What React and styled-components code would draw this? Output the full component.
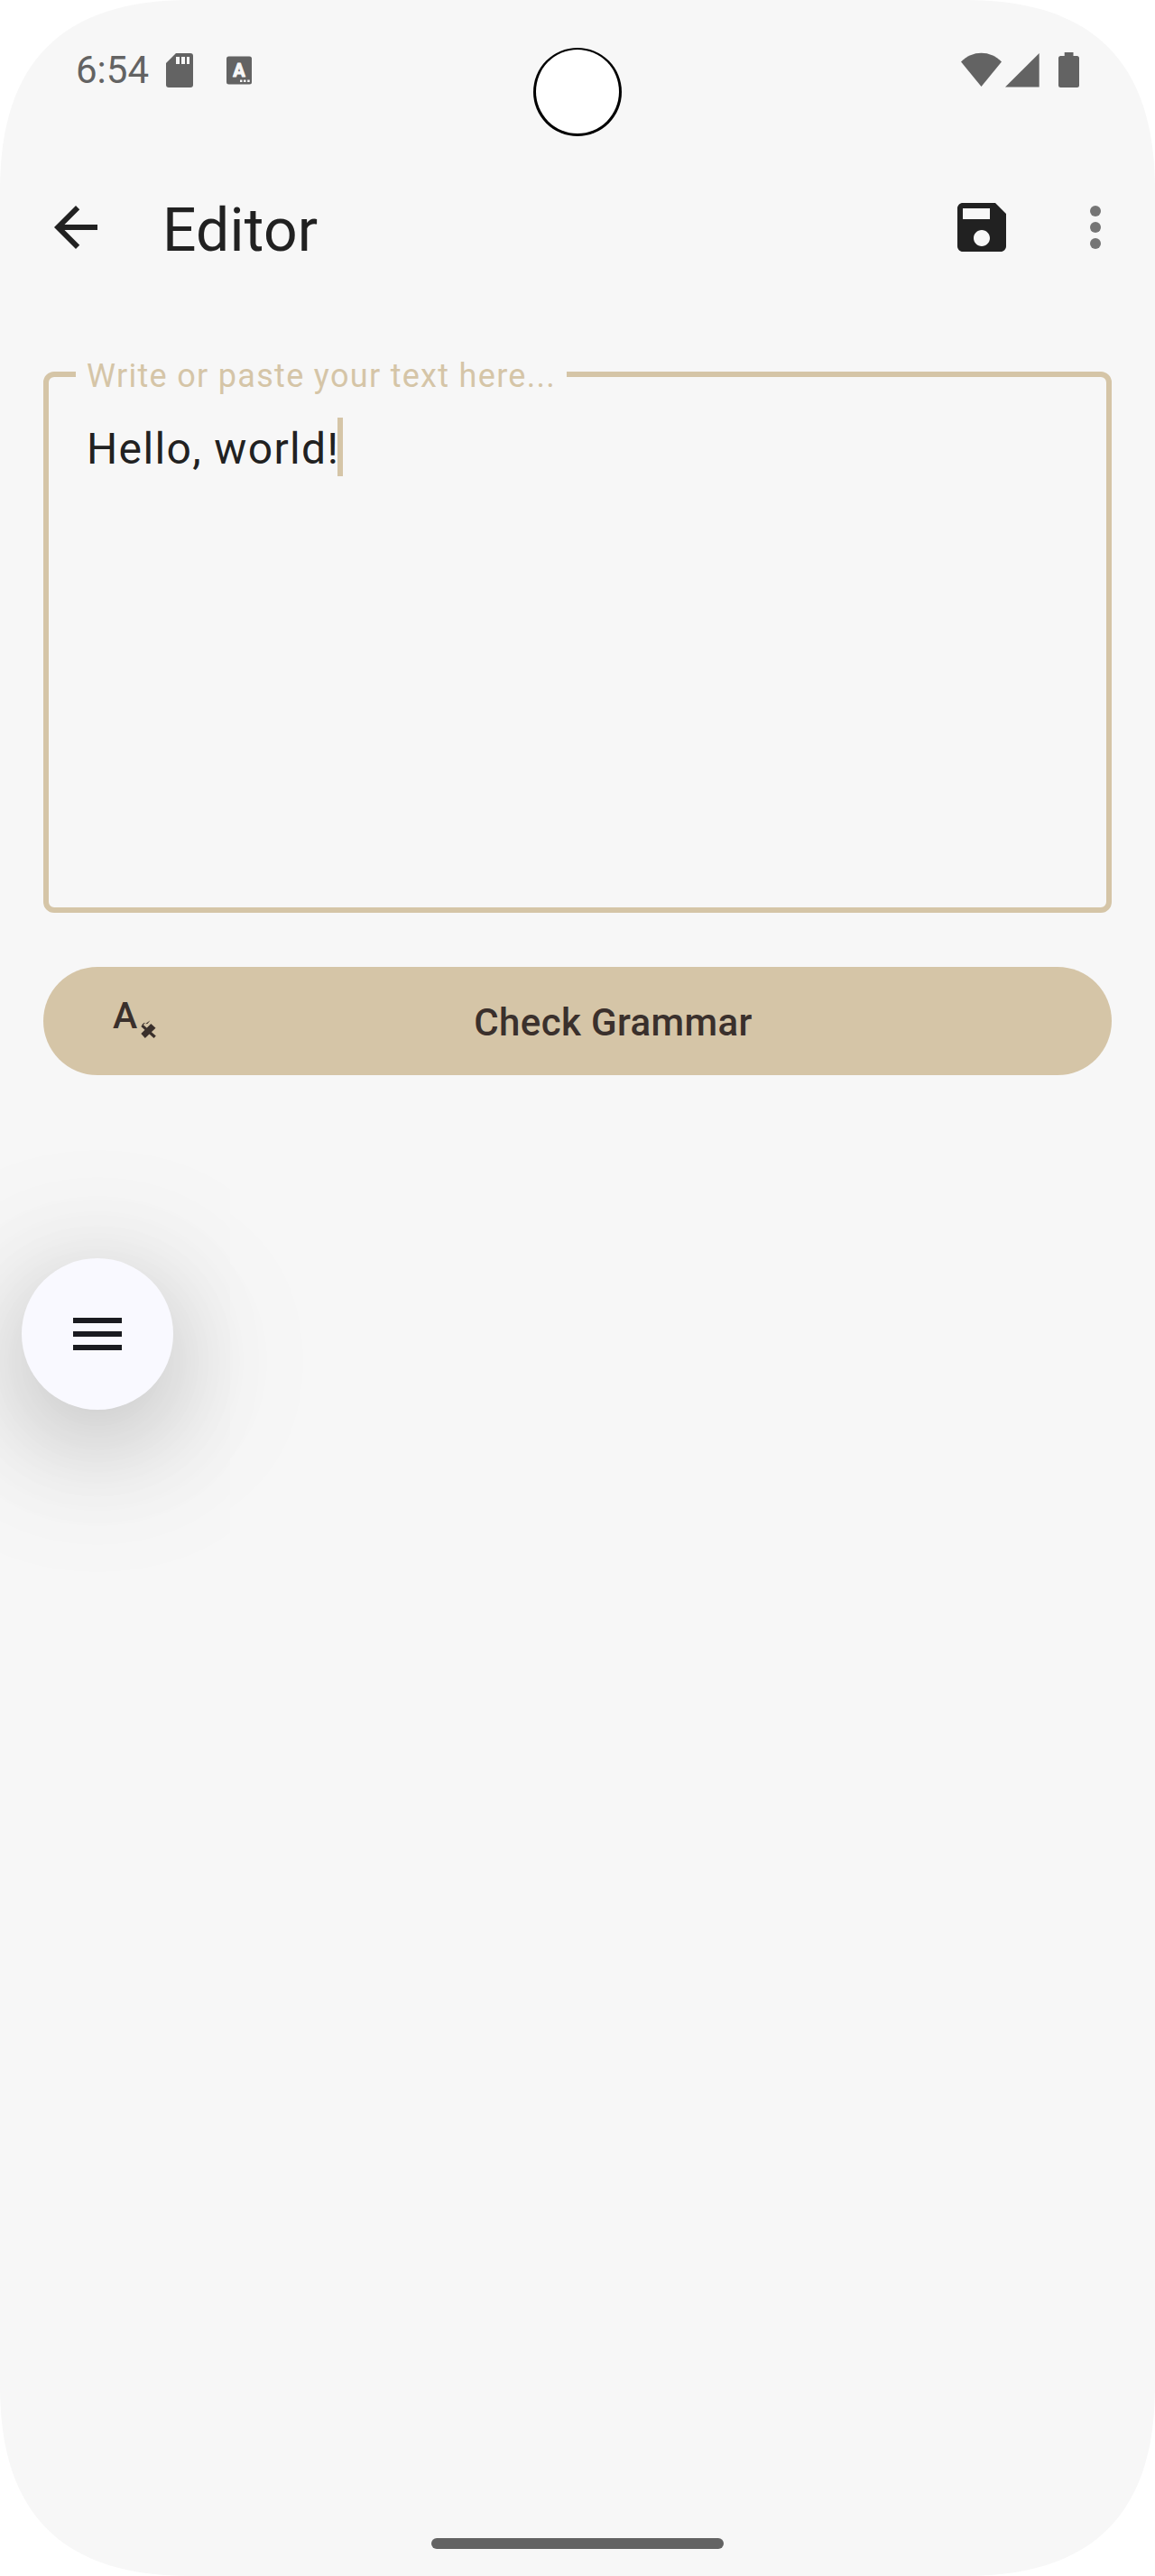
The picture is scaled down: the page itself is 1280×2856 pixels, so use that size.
import React from "react";
import styled, { createGlobalStyle } from "styled-components";

const colors = {
  surface: "#f7f7f7",
  sand: "#d5c5a7",
  ink: "#212121",
  cocoa: "#3a302c",
  system: "#636363",
};

const GlobalStyle = createGlobalStyle`
  html, body { margin: 0; padding: 0; background: #fff; }
  * { box-sizing: border-box; }
`;

const Screen = styled.div`
  position: relative;
  display: flex;
  flex-direction: column;
  width: 1280px;
  height: 2856px;
  overflow: hidden;
  background: ${colors.surface};
  color: ${colors.ink};
  font-family: Roboto, "Noto Sans", sans-serif;
  clip-path: path("M0 210C0 69 69 0 210 0H1070C1211 0 1280 69 1280 210V2646C1280 2787 1211 2856 1070 2856H210C69 2856 0 2787 0 2646Z");
`;

const StatusBar = styled.header`
  display: flex;
  justify-content: space-between;
  height: 156px;
  padding: 50px 84px 0;
  color: ${colors.system};
`;

const StatusGroup = styled.div`
  display: flex;
  align-items: center;
  height: 56px;
`;

const Clock = styled.span`
  width: 100px;
  font-size: 42px;
  line-height: 56px;
`;

const StatusIcon = styled.svg`
  display: block;
  width: ${(p) => p.$w}px;
  height: 56px;
  margin-left: ${(p) => p.$gap || 0}px;
  fill: currentColor;
`;

const IconLetter = styled.text`
  font: 700 20px Roboto, sans-serif;
  fill: ${colors.surface};
  stroke: ${colors.surface};
  stroke-width: 1px;
  stroke-linejoin: round;
`;

const Camera = styled.div`
  position: absolute;
  left: 591px;
  top: 53px;
  width: 98px;
  height: 98px;
  padding: 2px 3px 0;
  border-radius: 50%;
  background: #000;
`;

const Lens = styled.div`
  width: 92px;
  height: 93px;
  border-radius: 50%;
  background: #fff;
`;

const AppBar = styled.nav`
  display: flex;
  align-items: center;
  height: 192px;
  padding: 0 30px 0 48px;
`;

const Title = styled.h1`
  flex: 1;
  margin: 0 0 0 60px;
  padding-top: 8px;
  font-size: 66px;
  font-weight: 400;
  letter-spacing: 0.2px;
  line-height: 84px;
`;

const IconButton = styled.button`
  display: flex;
  width: 72px;
  height: 72px;
  margin: 0 0 0 ${(p) => p.$gap || 0}px;
  padding: 0;
  border: 0;
  background: none;
  color: ${(p) => p.$tone || colors.ink};
`;

const Glyph = styled.svg`
  display: block;
  width: 72px;
  height: 72px;
  fill: currentColor;
`;

const Content = styled.main`
  display: flex;
  flex-direction: column;
  gap: 60px;
  padding: 43px 48px 0;
`;

const Field = styled.fieldset`
  height: 621px;
  margin: 0;
  padding: 0 42px;
  min-width: 0;
  border: 6px solid ${colors.sand};
  border-radius: 12px;
`;

const Label = styled.legend`
  height: 48px;
  margin-left: -12px;
  padding: 0 12px;
  width: 544px;
  color: ${colors.sand};
  font-size: 36px;
  letter-spacing: 1.31px;
  line-height: 52px;
  white-space: nowrap;
`;

const Entry = styled.div`
  display: flex;
  align-items: flex-start;
  padding-top: 24px;
  font-size: 48px;
  letter-spacing: 1.36px;
  line-height: 70px;
  white-space: nowrap;
`;

const Caret = styled.span`
  width: 6px;
  height: 65px;
  margin-left: -2px;
  background: ${colors.sand};
`;

const PillButton = styled.button`
  display: flex;
  align-items: center;
  height: 120px;
  padding: 0 72px;
  border: 0;
  border-radius: 60px;
  background: ${colors.sand};
  color: ${colors.cocoa};
  font: 500 42px Roboto, sans-serif;
  letter-spacing: 0.38px;
`;

const SpellIcon = styled.span`
  display: flex;
  width: 60px;
  height: 60px;
  padding-left: 5px;
  letter-spacing: 0;
  line-height: 48px;
  font-size: 41px;
`;

const SpellMark = styled.svg`
  width: 18px;
  height: 20px;
  margin: 29px 0 0 4px;
  flex: none;
  fill: currentColor;
`;

const PillText = styled.span`
  flex: 1;
  padding: 3px 0 0 19px;
  text-align: center;
  line-height: 56px;
`;

const MenuFab = styled.button`
  display: flex;
  align-items: center;
  justify-content: center;
  width: 168px;
  height: 168px;
  margin: 203px 0 0 24px;
  padding: 0;
  border: 0;
  border-radius: 50%;
  background: #f9f9ff;
  color: #1a1b20;
  box-shadow:
    0 30px 110px rgba(0, 0, 0, 0.17),
    0 30px 190px rgba(0, 0, 0, 0.16);
`;

const HomeHandle = styled.div`
  width: 324px;
  height: 12px;
  margin: auto auto 30px;
  border-radius: 6px;
  background: ${colors.system};
`;

export default function App() {
  return (
    <>
      <GlobalStyle />
      <Screen>
        <StatusBar>
          <StatusGroup>
            <Clock>6:54</Clock>
            <StatusIcon $w={30} viewBox="0 0 30 56">
              <path d="M11 9H27Q30 9 30 12V44Q30 47 27 47H3Q0 47 0 44V20Z" />
              <path fill={colors.surface} d="M11 13h4v8h-4zM17 13h4v8h-4zM23 13h3v8h-3z" />
            </StatusIcon>
            <StatusIcon $w={28} $gap={37} viewBox="0 0 28 56">
              <rect y="12.5" width="28" height="31" rx="2.5" />
              <IconLetter x="14" y="34.5" textAnchor="middle">A</IconLetter>
              <path fill={colors.surface} d="M15 38.5h2.5v2.5h-2.5zM19 38.5h2.5v2.5h-2.5zM23.2 38.5h2.5v2.5h-2.5z" />
            </StatusIcon>
          </StatusGroup>
          <StatusGroup>
            <StatusIcon $w={45} viewBox="0 0 45 56">
              <path d="M22.5 46L0 18.5C6.500 12 14 8.700 22.500 8.700S38.500 12 45 18.500Z" />
            </StatusIcon>
            <StatusIcon $w={38} $gap={4} viewBox="0 0 38 56">
              <path d="M0 46.500L37.700 9V46.500Z" />
            </StatusIcon>
            <StatusIcon $w={23} $gap={21} viewBox="0 0 23 56">
              <path d="M6.700 8H16.500V12H20.500Q23 12 23 14.500V44.500Q23 47 20.500 47H2.500Q0 47 0 44.500V14.500Q0 12 2.500 12H6.700Z" />
            </StatusIcon>
          </StatusGroup>
        </StatusBar>
        <Camera>
          <Lens />
        </Camera>
        <AppBar>
          <IconButton aria-label="Back">
            <Glyph viewBox="0 0 24 24">
              <path d="M20 11H7.830l5.590-5.590L12 4l-8 8 8 8 1.410-1.410L7.830 13H20v-2z" />
            </Glyph>
          </IconButton>
          <Title>Editor</Title>
          <IconButton aria-label="Save">
            <Glyph viewBox="0 0 24 24">
              <path d="M17 3H5c-1.110 0-2 .9-2 2v14c0 1.100.89 2 2 2h14c1.100 0 2-.9 2-2V7l-4-4zm-5 16c-1.660 0-3-1.340-3-3s1.340-3 3-3 3 1.340 3 3-1.340 3-3 3zm3-10H5V5h10v4z" />
            </Glyph>
          </IconButton>
          <IconButton aria-label="More options" $gap={54} $tone="#757575">
            <Glyph viewBox="0 0 24 24">
              <circle cx="12" cy="6" r="2" />
              <circle cx="12" cy="12" r="2" />
              <circle cx="12" cy="18" r="2" />
            </Glyph>
          </IconButton>
        </AppBar>
        <Content>
          <Field>
            <Label>Write or paste your text here...</Label>
            <Entry>
              Hello, world!
              <Caret />
            </Entry>
          </Field>
          <PillButton>
            <SpellIcon>
              A
              <SpellMark viewBox="0 0 18 20">
                <path d="M0.300 15L11.300 4L16.500 8.700L4.800 20Z" />
                <path d="M2.300 4.800L16.800 17.600L14.500 20L0.300 7Z" />
                <path d="M1.300 5L4 2.800L4.600 3.600L2.200 5.800ZM5 4.200L10.500 0.300L7.500 4Z" />
              </SpellMark>
            </SpellIcon>
            <PillText>Check Grammar</PillText>
          </PillButton>
        </Content>
        <MenuFab aria-label="Menu">
          <Glyph viewBox="0 0 72 72">
            <path d="M9 18h54v6H9zM9 33h54v6H9zM9 48h54v6H9z" />
          </Glyph>
        </MenuFab>
        <HomeHandle />
      </Screen>
    </>
  );
}
